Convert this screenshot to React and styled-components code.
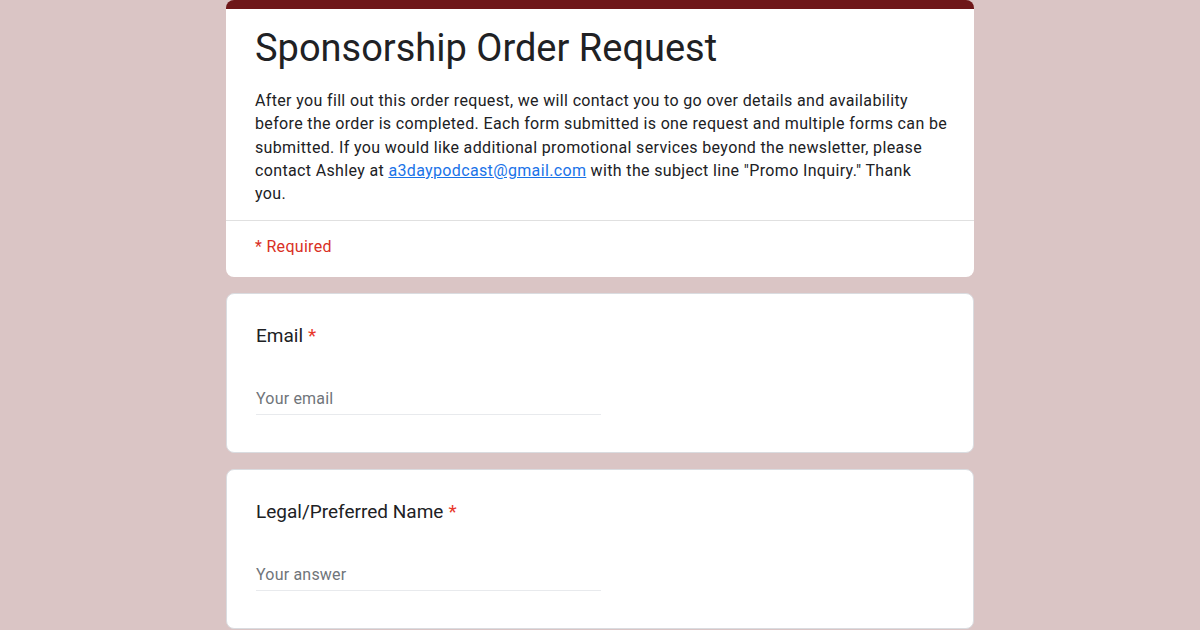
import React from "react";
import styled, { createGlobalStyle } from "styled-components";

const GlobalStyle = createGlobalStyle`
  html, body {
    margin: 0;
    padding: 0;
    background: #dac5c5;
    font-family: Roboto, "Liberation Sans", Arial, sans-serif;
    color: #202124;
  }
`;

const Page = styled.div`
  width: 748px;
  margin: 0 auto;
  display: flex;
  flex-direction: column;
  gap: 16px;
  padding-bottom: 2px;
`;

const Card = styled.div`
  background: #fff;
  border: 1px solid #dadce0;
  border-radius: 8px;
  overflow: hidden;
`;

const HeaderCard = styled(Card)`
  border: none;
  border-top: 9px solid #6e1719;
`;

const HeaderBody = styled.div`
  padding: 16px 22px 15px 29px;
  border-bottom: 1px solid #e0e0e0;
`;

const Title = styled.h1`
  margin: 0;
  font-family: Roboto, "Open Sans", sans-serif;
  font-weight: 400;
  font-size: 38px;
  line-height: 46px;
  color: #202124;
`;

const Description = styled.p`
  margin: 18px 0 0;
  font-size: 16px;
  letter-spacing: 0.35px;
  line-height: 23.3px;
  color: #202124;
`;

const Link = styled.a`
  color: #1a73e8;
  text-decoration: underline;
`;

const RequiredNote = styled.div`
  padding: 16px 29px 20px;
  font-size: 16px;
  letter-spacing: 0.3px;
  line-height: 20px;
  color: #d93025;
`;

const Question = styled(Card)`
  padding: 30px 29px 37px;
`;

const Label = styled.div`
  font-size: 19px;
  line-height: 24px;
  color: #202124;
`;

const Star = styled.span`
  color: #e8382b;
  margin-left: 5px;
`;

const Field = styled.div`
  margin-top: 41px;
  width: 345px;
  padding-bottom: 5px;
  border-bottom: 1px solid #e8eaed;
  font-size: 16px;
  letter-spacing: 0.2px;
  line-height: 20px;
  color: #70757a;
`;

const questions = [
  { label: "Email", placeholder: "Your email" },
  { label: "Legal/Preferred Name", placeholder: "Your answer" },
];

export default function App() {
  return (
    <>
      <GlobalStyle />
      <Page>
        <HeaderCard>
          <HeaderBody>
            <Title>Sponsorship Order Request</Title>
            <Description>
              After you fill out this order request, we will contact you to go
              over details and availability before the order is completed. Each
              form submitted is one request and multiple forms can be submitted.
              If you would like additional promotional services beyond the
              newsletter, please contact Ashley at{" "}
              <Link href="#">a3daypodcast@gmail.com</Link> with the subject line
              "Promo Inquiry." Thank
              <br />
              you.
            </Description>
          </HeaderBody>
          <RequiredNote>* Required</RequiredNote>
        </HeaderCard>
        {questions.map((q) => (
          <Question key={q.label}>
            <Label>
              {q.label}
              <Star>*</Star>
            </Label>
            <Field>{q.placeholder}</Field>
          </Question>
        ))}
      </Page>
    </>
  );
}
